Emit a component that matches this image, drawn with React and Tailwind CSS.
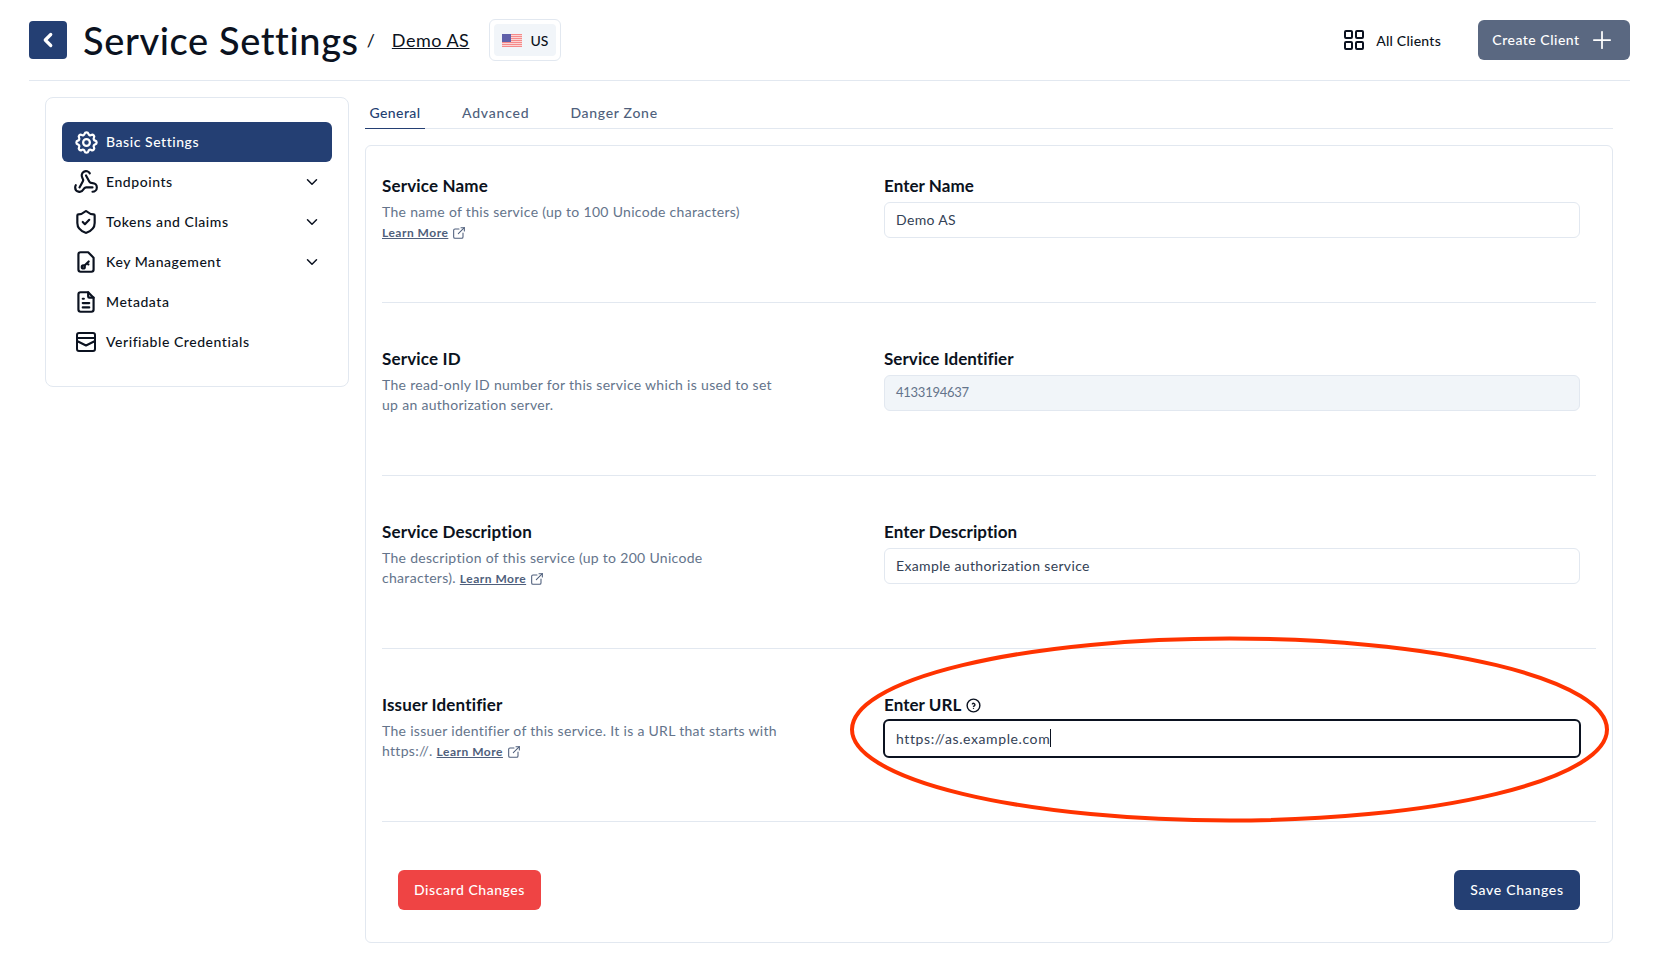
import React from "react";
import { TbSettings, TbFileText, TbChevronDown, TbChevronLeft, TbPlus, TbExternalLink, TbHelpCircle } from "react-icons/tb";
import { Webhook, ShieldCheck } from "lucide-react";

const F = "[font-family:Lato,sans-serif]";

function KeyDoc({ className }) {
  return (
    <svg className={className} viewBox="0 0 24 24" fill="none" stroke="currentColor" strokeWidth="2" strokeLinecap="round" strokeLinejoin="round">
      <path d="M14 3H7a2 2 0 0 0-2 2v14a2 2 0 0 0 2 2h10a2 2 0 0 0 2-2V8z" />
      <circle cx="9.5" cy="16.5" r="1.4" />
      <path d="M10.7 15.3l3.8-3.8M13 13l1.2 1.2" />
    </svg>
  );
}

function Box({ className }) {
  return (
    <svg className={className} viewBox="0 0 24 24" fill="none" stroke="currentColor" strokeWidth="2" strokeLinecap="round" strokeLinejoin="round">
      <rect x="3" y="3" width="18" height="18" rx="2" />
      <path d="M3 8h18" />
      <path d="M3 11l9 4.5 9-4.5" />
    </svg>
  );
}

function Grid({ className }) {
  return (
    <svg className={className} viewBox="0 0 20 20" fill="none" stroke="currentColor" strokeWidth="2">
      <rect x="1" y="1" width="7" height="7" rx="1" />
      <rect x="12" y="1" width="7" height="7" rx="1" />
      <rect x="1" y="12" width="7" height="7" rx="1" />
      <rect x="12" y="12" width="7" height="7" rx="1" />
    </svg>
  );
}

function Flag() {
  const stripes = [0, 2, 4, 6, 8, 10, 12];
  return (
    <svg width="20" height="13" viewBox="0 0 20 13" className="shrink-0">
      <rect width="20" height="13" fill="#fbd5d5" />
      {stripes.map((y) => (
        <rect key={y} y={y} width="20" height="1" fill="#f58a8a" />
      ))}
      <rect width="9" height="8" fill="#5f60aa" />
    </svg>
  );
}

function Learn() {
  return (
    <span className="inline-flex items-center gap-[3px] align-baseline">
      <span className="text-[12px] font-bold underline text-[#4f5f7c] tracking-[0.5px]">Learn More</span>
      <TbExternalLink className="w-4 h-4 text-[#4f5f7c]" strokeWidth={1.6} />
    </span>
  );
}

function Row({ first, title, desc, label, help, children }) {
  return (
    <div className={`grid grid-cols-[502px_1fr] h-[129px] border-b border-[#e2e8f0] ${first ? "" : "mt-11"}`}>
      <div className="flex flex-col">
        <div className="h-6 flex items-center text-[17px] font-bold tracking-[0.15px] text-[#0b1220]">{title}</div>
        <div className="mt-[4px] w-[400px] text-[14px] leading-5 text-[#64748b] tracking-[0.3px]">{desc}</div>
      </div>
      <div className="flex flex-col pr-4">
        <div className="h-6 flex items-center gap-1 text-[17px] font-bold tracking-[0.05px] text-[#0b1220]">
          {label}
          {help && <TbHelpCircle className="w-[17px] h-[17px]" />}
        </div>
        <div className="mt-1">{children}</div>
      </div>
    </div>
  );
}

const inputBase = "w-full h-9 rounded-md border border-[#e2e8f0] pl-[11px] pr-3 tracking-[0.35px] flex items-center";

function Nav({ icon: I, label, active, chevron, size = "w-[26px] h-[26px] -mx-px" }) {
  return (
    <div className={`h-10 flex items-center px-3 rounded-md ${active ? "bg-[#243f73] text-white" : "text-[#0b1220]"}`}>
      <I className={`${size} shrink-0`} />
      <span className="ml-2 pb-[2px] text-[14px] font-medium tracking-[0.55px] flex-1">{label}</span>
      {chevron && <TbChevronDown className="w-[18px] h-[18px] -mr-px" />}
    </div>
  );
}

export default function App() {
  return (
    <div className={`${F} w-[1659px] h-[970px] bg-white relative overflow-hidden`}>
      <header className="mx-[29px] h-[81px] border-b border-[#e2e8f0] flex items-center">
        <button className="w-[38px] h-[38px] rounded bg-[#243f73] text-white flex items-center justify-center">
          <TbChevronLeft className="w-[22px] h-[22px]" strokeWidth={3.5} />
        </button>
        <h1 className="ml-4 text-[38px] font-medium text-[#0b1220] tracking-[0.6px]">Service Settings</h1>
        <span className="ml-2 text-[18px] text-[#0b1220]">/</span>
        <a className="ml-[17px] text-[18px] underline text-[#0b1220] tracking-[0.5px]">Demo AS</a>
        <div className="ml-5 w-[72px] h-[42px] border border-[#e2e8f0] rounded-md p-1">
          <div className="h-full rounded bg-[#f1f5f9] flex items-center pl-2 gap-[8px]">
            <Flag />
            <span className="text-[14px] font-medium text-[#0b1220]">US</span>
          </div>
        </div>
        <div className="ml-auto flex items-center gap-3 text-[14px] font-medium text-[#0b1220] tracking-[0.25px]">
          <Grid className="w-5 h-5" />
          All Clients
        </div>
        <button className="ml-[37px] w-[152px] h-10 rounded-md bg-[#5a6881] text-white text-[14px] font-medium flex items-center justify-center gap-2 tracking-[0.5px] pb-px">
          Create Client
          <TbPlus className="w-7 h-7" strokeWidth={1.5} />
        </button>
      </header>

      <div className="flex pl-[45px] pt-4">
        <aside className="w-[304px] h-[290px] border border-[#e2e8f0] rounded-lg px-4 pt-6 shrink-0">
          <Nav icon={TbSettings} label="Basic Settings" active size="w-[27px] h-[27px] -mx-[1.5px]" />
          <Nav icon={Webhook} label="Endpoints" chevron />
          <Nav icon={ShieldCheck} label="Tokens and Claims" chevron />
          <Nav icon={KeyDoc} label="Key Management" chevron />
          <Nav icon={TbFileText} label="Metadata" />
          <Nav icon={Box} label="Verifiable Credentials" size="w-6 h-6" />
        </aside>
        <main className="ml-4 w-[1248px]">
          <div className="flex h-[32px] border-b border-[#e2e8f0] text-[14px] font-medium text-[#4f5f7c]">
            <div className="w-[60px] text-center border-b border-[#243f73] text-[#243f73] h-[32px] leading-[32px] tracking-[0.4px]">General</div>
            <div className="ml-[37px] leading-[32px] tracking-[0.8px]">Advanced</div>
            <div className="ml-[41px] leading-[32px] tracking-[0.7px]">Danger Zone</div>
          </div>
          <div className="mt-4 h-[798px] border border-[#e2e8f0] rounded-md px-4 pt-7 text-[14px]">
            <Row first title="Service Name" label="Enter Name" desc={<>The name of this service (up to 100 Unicode characters) <Learn /></>}>
              <div className={`${inputBase} pb-[2px] text-[#334155]`}>Demo AS</div>
            </Row>
            <Row title="Service ID" label="Service Identifier" desc="The read-only ID number for this service which is used to set up an authorization server.">
              <div className={`${inputBase} bg-[#f1f5f9] text-[#64748b]`}><span className="text-[13px] tracking-[-0.25px]">4133194637</span></div>
            </Row>
            <Row title="Service Description" label="Enter Description" desc={<>The description of this service (up to 200 Unicode<br />characters). <Learn /></>}>
              <div className={`${inputBase} pb-[2px] text-[#334155]`}>Example authorization service</div>
            </Row>
            <Row title="Issuer Identifier" label="Enter URL" help desc={<>The issuer identifier of this service. It is a URL that starts with https://. <Learn /></>}>
              <div className="-mx-px -mt-[2px] h-[39px] rounded-md border-2 border-[#0b1220] px-[11px] pb-px text-[14px] tracking-[0.6px] text-[#334155] flex items-center">
                https://as.example.com<span className="w-px h-[18px] bg-[#0b1220]" />
              </div>
            </Row>
            <div className="mt-12 flex justify-between px-4">
              <button className="w-[143px] h-10 pb-[2px] rounded-md bg-[#ef4444] text-white text-[14px] font-medium tracking-[0.55px]">Discard Changes</button>
              <button className="w-[126px] h-10 pb-[2px] rounded-md bg-[#243f73] text-white text-[14px] font-medium tracking-[0.7px]">Save Changes</button>
            </div>
          </div>
        </main>
      </div>

      <svg className="absolute left-0 top-0 pointer-events-none" width="1659" height="970" fill="none">
        <ellipse cx="1229.5" cy="729.5" rx="377.5" ry="91" stroke="#ff3300" strokeWidth="4" />
      </svg>
    </div>
  );
}
